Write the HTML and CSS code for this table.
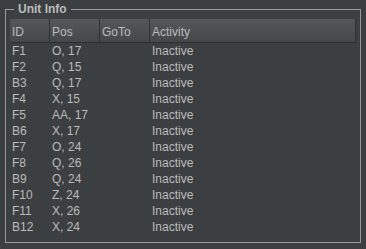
FILE: index.html
```html
<!DOCTYPE html>
<html>
<head>
<meta charset="utf-8">
<link rel="stylesheet" href="styles.css">
</head>
<body>
<fieldset class="panel">
  <legend class="panel-title">Unit Info</legend>
  <div class="grid">
    <div class="hcell">ID</div><div class="hcell">Pos</div><div class="hcell">GoTo</div><div class="hcell last">Activity</div>
    <div class="cell">F1</div><div class="cell">O, 17</div><div class="cell"></div><div class="cell">Inactive</div>
    <div class="cell">F2</div><div class="cell">Q, 15</div><div class="cell"></div><div class="cell">Inactive</div>
    <div class="cell">B3</div><div class="cell">Q, 17</div><div class="cell"></div><div class="cell">Inactive</div>
    <div class="cell">F4</div><div class="cell">X, 15</div><div class="cell"></div><div class="cell">Inactive</div>
    <div class="cell">F5</div><div class="cell">AA, 17</div><div class="cell"></div><div class="cell">Inactive</div>
    <div class="cell">B6</div><div class="cell">X, 17</div><div class="cell"></div><div class="cell">Inactive</div>
    <div class="cell">F7</div><div class="cell">O, 24</div><div class="cell"></div><div class="cell">Inactive</div>
    <div class="cell">F8</div><div class="cell">Q, 26</div><div class="cell"></div><div class="cell">Inactive</div>
    <div class="cell">B9</div><div class="cell">Q, 24</div><div class="cell"></div><div class="cell">Inactive</div>
    <div class="cell">F10</div><div class="cell">Z, 24</div><div class="cell"></div><div class="cell">Inactive</div>
    <div class="cell">F11</div><div class="cell">X, 26</div><div class="cell"></div><div class="cell">Inactive</div>
    <div class="cell">B12</div><div class="cell">X, 24</div><div class="cell"></div><div class="cell">Inactive</div>
  </div>
</fieldset>
</body>
</html>
```
FILE: styles.css
```css
html, body {
  margin: 0;
  padding: 0;
  height: 100%;
  background: #3c3f41;
}

body {
  font-family: "Liberation Sans", Arial, sans-serif;
  font-size: 12px;
  color: #bbbbbb;
  overflow: hidden;
}

.panel {
  box-sizing: border-box;
  margin: 2px 5px 6px 5px;
  height: 241px;
  padding: 3px 4px 0 4px;
  border: 1px solid #9a9a9a;
  min-width: 0;
}

.panel-title {
  margin-left: 4px;
  padding: 0 4px;
  font-weight: bold;
  line-height: 14px;
  color: #bbbbbb;
}

.grid {
  display: grid;
  grid-template-columns: 40px 50px 50px 1fr;
}

.hcell {
  height: 23px;
  box-sizing: border-box;
  padding: 6px 2px 3px 2px;
  line-height: 14px;
  white-space: nowrap;
  background: linear-gradient(#53575a, #45484b);
  border-right: 1px solid #2e3032;
  border-bottom: 1px solid #2b2d2f;
  height: 24px;
}

.cell {
  height: 16px;
  line-height: 16px;
  padding-left: 2px;
  white-space: nowrap;
}
```
